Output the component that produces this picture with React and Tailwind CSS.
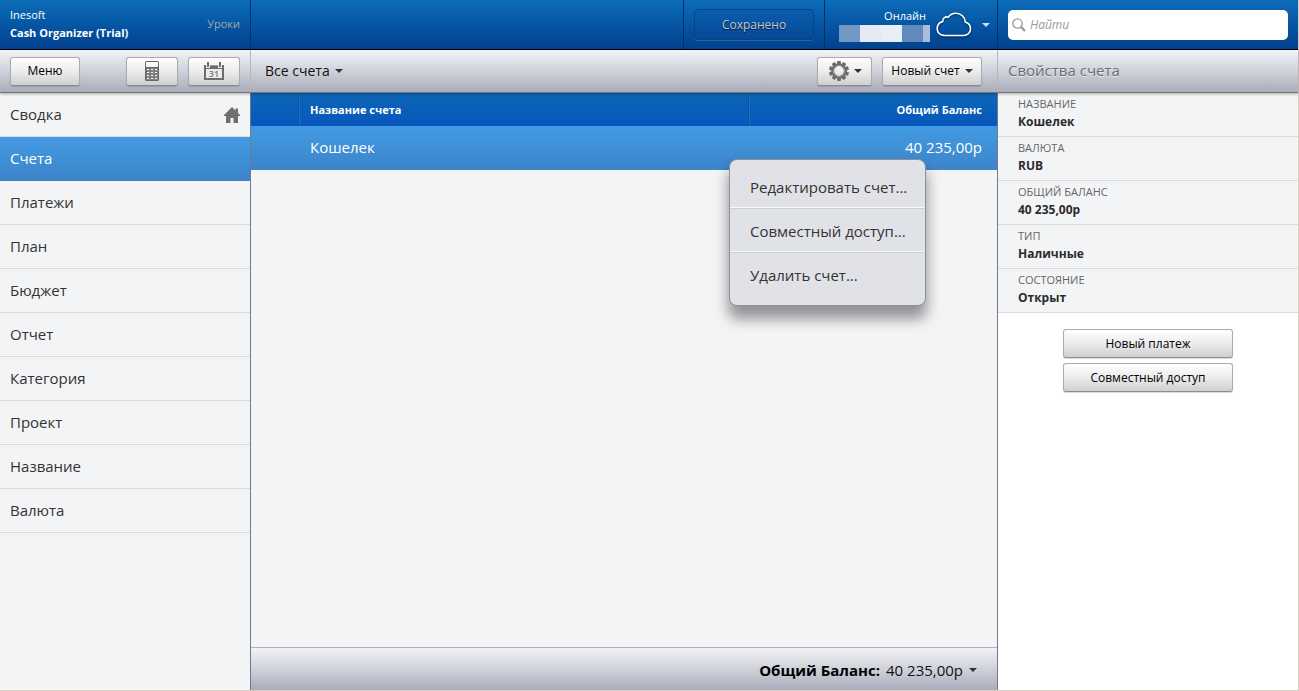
import { useState } from "react";

const NAV_ITEMS = ['Сводка', 'Счета', 'Платежи', 'План', 'Бюджет', 'Отчет', 'Категория', 'Проект', 'Название', 'Валюта'];

const MENU_ITEMS = ['Редактировать счет...', 'Совместный доступ...', 'Удалить счет...'];

const ACCOUNTS = [{ name: 'Кошелек', balance: '40 235,00р' }];

const PROPERTIES = [
  { label: 'Название', value: 'Кошелек' },
  { label: 'Валюта', value: 'RUB' },
  { label: 'Общий баланс', value: '40 235,00р' },
  { label: 'Тип', value: 'Наличные' },
  { label: 'Состояние', value: 'Открыт' }
];

const BUTTON = 'flex items-center justify-center rounded-[3px] border border-[#a9abb0] border-b-[#8b8d92] bg-linear-to-b from-white via-[#ececec] to-[#cfcfcf] text-xs text-black shadow-[0_1px_1px_rgba(0,0,0,0.15)]';

const Caret = ({ className = 'text-[#333]' }) => (
  <svg viewBox="0 0 8 4" className={`h-1 w-2 shrink-0 ${className}`} fill="currentColor" aria-hidden="true">
    <path d="M0 0h8L4 4z" />
  </svg>
);

const CalculatorIcon = () => (
  <svg viewBox="0 0 14 20" className="h-5 w-3.5" aria-hidden="true">
    <rect width="14" height="20" rx="1.5" fill="#666" />
    <rect x="1" y="1" width="12" height="5" fill="#f8f8f8" />
    <rect x="1" y="7" width="12" height="12" fill="#c4c4c4" />
    {[7, 10, 13, 16].map((y) => [2, 6, 10].map((x) => (
      <rect key={`${x}-${y}`} x={x - 0.5} y={y + 0.5} width="3" height="2" fill="#f4f4f4" stroke="#6a6a6a" strokeWidth="0.8" />
    )))}
  </svg>
);

const CalendarIcon = () => (
  <svg viewBox="0 0 20 18" className="h-[18px] w-5" aria-hidden="true">
    <path d="M0 3h2v3h4V3h8v3h4V3h2v15H0z" fill="#6c6c6c" />
    <rect x="2" y="7" width="16" height="9" fill="#ececec" />
    <path d="M3 0h2v5H3zM15 0h2v5h-2z" fill="#6c6c6c" />
    <path d="M6 3h8v1H6z" fill="#999" />
    <text x="10" y="15" textAnchor="middle" fontSize="9" fontWeight="600" fill="#777">31</text>
  </svg>
);

const HomeIcon = () => (
  <svg viewBox="0 0 16 16" className="h-4 w-4" fill="#707070" aria-hidden="true">
    <path d="M8 0l3.500 3.500V1.500h2.500V6l2 2v1h-2v7H9.500v-5h-3v5H2V9H0V8z" />
  </svg>
);

const GearIcon = () => (
  <svg viewBox="0 0 20 20" className="h-5 w-5" aria-hidden="true">
    {[0, 36, 72, 108, 144, 180, 216, 252, 288, 324].map((angle) => (
      <path key={angle} d="M8.3 0h3.4l.5 4H7.8z" fill="#6b6b6b" transform={`rotate(${angle} 10 10)`} />
    ))}
    <circle cx="10" cy="10" r="6.2" fill="none" stroke="#6b6b6b" strokeWidth="2.6" />
    <circle cx="10" cy="10" r="5.6" fill="none" stroke="#999" strokeWidth="1" />
  </svg>
);

const CloudIcon = () => (
  <svg viewBox="0 0 36 26" className="h-[26px] w-9 drop-shadow-[0_1px_1px_rgba(0,0,0,0.5)]" fill="none" stroke="#fff" strokeWidth="1.6" strokeLinejoin="round" aria-hidden="true">
    <path d="M8.5 23.5C4 23.5 1.2 20.5 1.2 16.7C1.2 13 3.5 10.5 6.800 9.6C6.2 6.5 9.2 4 12.2 5.2C14 2.7 16.8 1.3 19.8 1.3C25 1.3 29 5 29.3 10C32.5 11 34.5 13.5 34.5 16.8C34.5 20.5 31.7 23.5 27.5 23.5Z" />
  </svg>
);

const SearchIcon = () => (
  <svg viewBox="0 0 14 14" className="h-3.5 w-3.5 shrink-0" fill="none" stroke="#999" aria-hidden="true">
    <circle cx="5.5" cy="5.5" r="4.7" strokeWidth="1.3" />
    <path d="M9 9l4 4" strokeWidth="2.4" />
  </svg>
);

const Header = () => (
  <header className="flex h-[50px] shrink-0 border-b border-black bg-linear-to-b from-[#0d6cb8] to-[#02418f] text-white">
    <div className="flex w-[251px] shrink-0 items-center justify-between border-r border-[#06305f] px-2.5">
      <div className="pb-0.5 text-[11px] leading-[18px]">
        <div>Inesoft</div>
        <div className="font-bold">Cash Organizer (Trial)</div>
      </div>
      <a href="#lessons" className="text-[11px] text-[#a5a5a8]">Уроки</a>
    </div>
    <div className="flex min-w-0 flex-1 justify-end border-r border-[#06305f]">
      <div className="flex items-center border-l border-[#06305f] px-2.5">
        <button className="h-[31px] w-[120px] rounded-sm border border-[#08427f] bg-linear-to-b from-[#0b5eac] to-[#06489a] text-xs text-[#c3c8cf] shadow-[0_1px_0_rgba(255,255,255,0.15)] text-shadow-[0_1px_1px_rgba(0,0,0,0.7)]">
          Сохранено
        </button>
      </div>
      <div className="flex items-center gap-1.5 border-l border-[#06305f] pr-[5px] pl-3.5">
        <div className="flex flex-col items-end">
          <span className="pr-1 text-[11px] leading-[18px]">Онлайн</span>
          <div className="flex h-[17px] w-[91px]">
            <span className="w-[21px] bg-[#7397c5]" />
            <span className="w-[21px] bg-[#e6e9f2]" />
            <span className="w-[21px] bg-[#e8edf6]" />
            <span className="w-[21px] bg-[#6189bb]" />
            <span className="w-[7px] bg-[#a9bcd9]" />
          </div>
        </div>
        <CloudIcon />
        <button aria-label="Профиль" className="ml-0.5 flex h-5 w-3 items-center justify-center">
          <Caret className="text-[#c9e2fb]" />
        </button>
      </div>
    </div>
    <div className="flex w-[300px] shrink-0 items-center px-2.5">
      <label className="flex h-[30px] w-full items-center gap-1 rounded-[5px] bg-white px-1">
        <SearchIcon />
        <input type="search" aria-label="Найти" placeholder="Найти" className="min-w-0 flex-1 text-xs text-[#333] italic outline-none placeholder:text-[#999]" />
      </label>
    </div>
  </header>
);

const Toolbar = () => (
  <div className="relative z-10 flex h-[43px] shrink-0 border-b border-[#737377] bg-linear-to-b from-[#f2f3f6] via-[#cfd2da] to-[#aaadba] shadow-[0_1px_3px_rgba(0,0,0,0.3)]">
    <div className="flex w-[251px] shrink-0 items-center border-r border-[#b5b7c0] px-2.5">
      <button className={`${BUTTON} mr-auto h-[29px] w-[70px]`}>Меню</button>
      <button aria-label="Калькулятор" className={`${BUTTON} mr-2.5 h-[29px] w-[52px]`}><CalculatorIcon /></button>
      <button aria-label="Календарь" className={`${BUTTON} h-[29px] w-[52px]`}><CalendarIcon /></button>
    </div>
    <div className="flex min-w-0 flex-1 items-center gap-2.5 border-r border-[#b5b7c0] pr-[15px] pl-3.5">
      <button className="mr-auto flex items-center gap-[5px] text-sm text-[#111]">Все счета <Caret /></button>
      <button aria-label="Настройки" className={`${BUTTON} h-[29px] w-[55px] gap-[5px] pl-0.5`}><GearIcon /><Caret /></button>
      <button className={`${BUTTON} h-[29px] w-[100px] gap-[5px]`}>Новый счет <Caret /></button>
    </div>
    <h2 className="flex w-[300px] shrink-0 items-center px-2.5 pb-0.5 text-[15px] text-[#6a6d75] text-shadow-[0_1px_0_rgba(255,255,255,0.6)]">
      Свойства счета
    </h2>
  </div>
);

const Sidebar = ({ active, onSelect }) => (
  <nav className="w-[251px] shrink-0 border-r border-[#73788c] bg-[#f3f4f6]">
    {NAV_ITEMS.map((item, i) => (
      <button
        key={item}
        onClick={() => onSelect(item)}
        className={`flex h-11 w-full items-center justify-between border-b px-2.5 text-left text-[15px] ${active === item
          ? 'border-[#3c84c8] bg-linear-to-b from-[#429be4] to-[#3d84c8] text-white'
          : 'border-[#d9dadc] text-[#333]'
          }`}
      >
        {item}
        {i === 0 && <HomeIcon />}
      </button>
    ))}
  </nav>
);

const AccountsTable = () => (
  <table className="w-full table-fixed border-collapse text-left text-white">
    <colgroup>
      <col className="w-12" />
      <col />
      <col className="w-[248px]" />
    </colgroup>
    <thead>
      <tr className="h-[33px] bg-linear-to-b from-[#0d66b4] to-[#0957bd] text-[11px]">
        <th className="p-0" aria-label="Выбор" />
        <th className="p-0 pt-0.5 pl-[11px] shadow-[inset_1px_0_0_#1f6fbd,-1px_0_0_#0a559f]">Название счета</th>
        <th className="p-0 pt-0.5 pr-[15px] text-right shadow-[inset_1px_0_0_#1f6fbd,-1px_0_0_#0a559f]">Общий Баланс</th>
      </tr>
    </thead>
    <tbody>
      {ACCOUNTS.map((account) => (
        <tr key={account.name} className="h-11 bg-linear-to-b from-[#429be4] to-[#3d84c8] text-[15px]">
          <td className="p-0" />
          <td className="p-0 pb-0.5 pl-[11px]">{account.name}</td>
          <td className="p-0 pr-[15px] pb-0.5 text-right">{account.balance}</td>
        </tr>
      ))}
    </tbody>
  </table>
);

const ContextMenu = () => (
  <div role="menu" className="absolute top-[66px] right-[71px] w-[197px] rounded-lg border border-[#8f9198] bg-[#e1e2e8] pt-[5px] pb-2 shadow-[0_12px_14px_1px_rgba(0,0,0,0.4)]">
    {MENU_ITEMS.map((item) => (
      <button
        key={item}
        role="menuitem"
        className="flex h-11 w-full items-center border-b border-[#cbd0d9] px-5 pt-0.5 text-left text-[15px] whitespace-nowrap text-[#333] shadow-[inset_0_-1px_0_#f8f8fa] last:border-transparent last:shadow-none"
      >
        {item}
      </button>
    ))}
  </div>
);

const Properties = () => (
  <aside className="w-[300px] shrink-0 bg-white">
    <dl className="bg-[#f3f4f6]">
      {PROPERTIES.map((prop) => (
        <div key={prop.label} className="flex h-11 flex-col justify-center border-b border-[#d9dadc] px-5 pb-[3px]">
          <dt className="text-[11px] leading-[18px] text-[#666] uppercase">{prop.label}</dt>
          <dd className="text-xs leading-[18px] font-bold text-[#2b2b2b]">{prop.value}</dd>
        </div>
      ))}
    </dl>
    <div className="flex flex-col items-center gap-[5px] py-4">
      <button className={`${BUTTON} h-[29px] w-[170px]`}>Новый платеж</button>
      <button className={`${BUTTON} h-[29px] w-[170px]`}>Совместный доступ</button>
    </div>
  </aside>
);

const App = () => {
  const [active, setActive] = useState('Счета');

  return (
    <div className="flex min-h-screen flex-col border-r border-b border-[#d4d0c8] bg-white font-['Open_Sans','Noto_Sans',sans-serif]">
      <Header />
      <Toolbar />
      <div className="flex flex-1">
        <Sidebar active={active} onSelect={setActive} />
        <main className="relative flex min-w-0 flex-1 flex-col border-r border-[#73788c] bg-[#f3f4f6]">
          <AccountsTable />
          <ContextMenu />
          <footer className="mt-auto flex h-[43px] items-center justify-end gap-1.5 border-t border-[#b0b2b8] bg-linear-to-b from-[#f2f3f6] via-[#cfd2da] to-[#aaadba] pt-0.5 pr-5 text-[15px] text-[#111]">
            <span className="font-bold text-black">Общий Баланс:</span>
            <button className="flex items-center gap-1.5">40 235,00р <Caret /></button>
          </footer>
        </main>
        <Properties />
      </div>
    </div>
  );
};

export default App;
